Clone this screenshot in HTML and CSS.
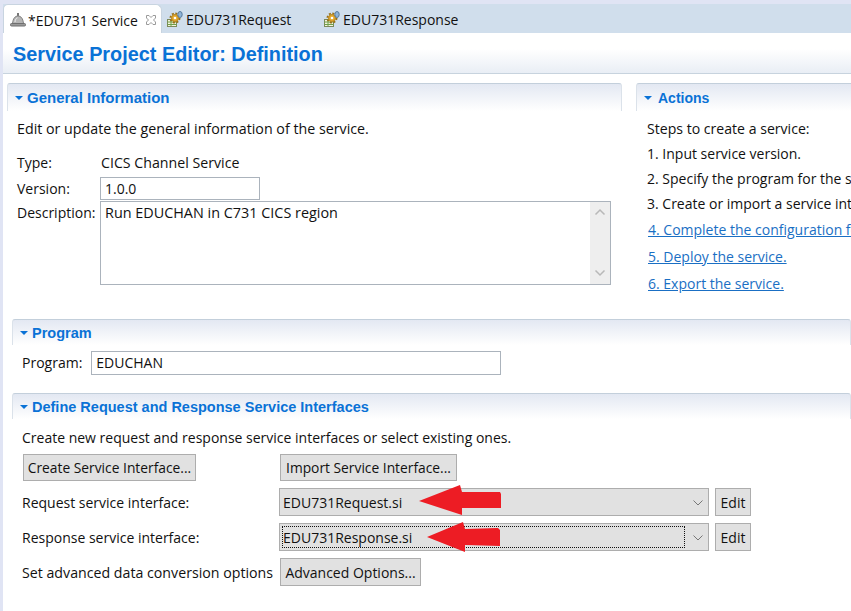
FILE: index.html
```html
<!DOCTYPE html>
<html lang="en">
<head>
    <meta charset="UTF-8">
    <meta name="viewport" content="width=device-width, initial-scale=1.0">
    <title>Service Project Editor</title>
    <link rel="stylesheet" href="styles.css">
</head>
<body>

<!-- Editor tabs -->
<div class="tab-bar">
    <div class="tab tab-active">
        <svg class="tab-icon" width="16" height="16" viewBox="0 0 16 16">
            <rect x="7" y="1" width="2" height="3" fill="#777"/>
            <path d="M2.500 11.500C3 6.500 5 4 8 4s5 2.500 5.500 7.500z" fill="#b5b5b5" stroke="#808080"/>
            <path d="M5 10C5.300 7.500 6 6.300 7.500 5.800" fill="none" stroke="#eee"/>
            <rect x="0.500" y="11.500" width="15" height="2.500" rx="1" fill="#999" stroke="#6f6f6f"/>
        </svg>
        <span class="tab-label">*EDU731 Service</span>
        <svg class="tab-close" width="12" height="12" viewBox="0 0 12 12">
            <path d="M1.500 1.500h2.500L6 3.500 8 1.500h2.500v2.500L8.500 6l2 2v2.500H8L6 8.500 4 10.500H1.500V8l2-2-2-2z" fill="#fff" stroke="#9a9a9a"/>
        </svg>
    </div>
    <div class="tab tab-request">
        <svg class="tab-icon" width="16" height="16" viewBox="0 0 16 16">
            <rect x="0.500" y="8.500" width="9" height="7" fill="#f3f3dc" stroke="#7c8a5a"/>
            <path d="M0.500 11h9M0.500 13.500h9M4 9v6" stroke="#6fa04a" fill="none"/>
            <circle cx="8" cy="7" r="4.500" fill="none" stroke="#96701a" stroke-width="2" stroke-dasharray="2 1.500"/>
            <circle cx="8" cy="7" r="3.500" fill="#e3a92f" stroke="#b8861f"/>
            <circle cx="8" cy="7" r="1.300" fill="#fff"/>
            <ellipse cx="13" cy="3.500" rx="2.200" ry="3" fill="#8fb4d8" stroke="#55789c"/>
        </svg>
        <span class="tab-label">EDU731Request</span>
    </div>
    <div class="tab tab-response">
        <svg class="tab-icon" width="16" height="16" viewBox="0 0 16 16">
            <rect x="0.500" y="8.500" width="9" height="7" fill="#f3f3dc" stroke="#7c8a5a"/>
            <path d="M0.500 11h9M0.500 13.500h9M4 9v6" stroke="#6fa04a" fill="none"/>
            <circle cx="8" cy="7" r="4.500" fill="none" stroke="#96701a" stroke-width="2" stroke-dasharray="2 1.500"/>
            <circle cx="8" cy="7" r="3.500" fill="#e3a92f" stroke="#b8861f"/>
            <circle cx="8" cy="7" r="1.300" fill="#fff"/>
            <ellipse cx="13" cy="3.500" rx="2.200" ry="3" fill="#8fb4d8" stroke="#55789c"/>
        </svg>
        <span class="tab-label">EDU731Response</span>
    </div>
</div>

<div class="editor">
    <h1 class="editor-title">Service Project Editor: Definition</h1>

    <div class="columns">
        <!-- General information -->
        <section class="section section-general">
            <h2 class="section-head"><span class="twistie"></span>General Information</h2>
            <p class="intro">Edit or update the general information of the service.</p>
            <div class="info-grid">
                <span class="info-label">Type:</span>
                <span class="info-type">CICS Channel Service</span>
                <span class="info-label">Version:</span>
                <div class="field field-version">1.0.0</div>
                <span class="info-label">Description:</span>
                <div class="field field-description">
                    <span>Run EDUCHAN in C731 CICS region</span>
                    <div class="scrollbar">
                        <svg width="12" height="8" viewBox="0 0 12 8"><path d="M1.500 6.500L6 2l4.500 4.500" fill="none" stroke="#b8b8b8" stroke-width="1.500"/></svg>
                        <svg width="12" height="8" viewBox="0 0 12 8"><path d="M1.500 1.500L6 6l4.500-4.500" fill="none" stroke="#b8b8b8" stroke-width="1.500"/></svg>
                    </div>
                </div>
            </div>
        </section>

        <!-- Actions -->
        <section class="section section-actions">
            <h2 class="section-head"><span class="twistie"></span>Actions</h2>
            <ul class="steps">
                <li>Steps to create a service:</li>
                <li>1. Input service version.</li>
                <li>2. Specify the program for the service.</li>
                <li>3. Create or import a service interface.</li>
                <li class="step-link"><a href="#">4. Complete the configuration for the service.</a></li>
                <li class="step-link"><a href="#">5. Deploy the service.</a></li>
                <li class="step-link"><a href="#">6. Export the service.</a></li>
            </ul>
        </section>
    </div>

    <!-- Program -->
    <section class="section section-program">
        <h2 class="section-head"><span class="twistie"></span>Program</h2>
        <div class="program-row">
            <span>Program:</span>
            <div class="field field-program">EDUCHAN</div>
        </div>
    </section>

    <!-- Service interfaces -->
    <section class="section section-interfaces">
        <h2 class="section-head"><span class="twistie"></span>Define Request and Response Service Interfaces</h2>
        <p class="interfaces-intro">Create new request and response service interfaces or select existing ones.</p>
        <div class="iface-grid">
            <div><button class="btn btn-create">Create Service Interface...</button></div>
            <div><button class="btn btn-import">Import Service Interface...</button></div>
            <div></div>

            <span>Request service interface:</span>
            <div class="select">
                <span>EDU731Request.si</span>
                <svg class="chevron" width="12" height="8" viewBox="0 0 12 8"><path d="M1.500 1.500L6 6l4.500-4.500" fill="none" stroke="#777"/></svg>
                <svg class="red-arrow arrow-request" width="83" height="30" viewBox="0 0 83 30"><path d="M0 16L41 0l2 7h38l1 2v14H43v7z" fill="#ed1c24"/></svg>
            </div>
            <button class="btn btn-edit">Edit</button>

            <span>Response service interface:</span>
            <div class="select select-focus">
                <span class="select-value">EDU731Response.si</span>
                <svg class="chevron" width="12" height="8" viewBox="0 0 12 8"><path d="M1.500 1.500L6 6l4.500-4.500" fill="none" stroke="#777"/></svg>
                <svg class="red-arrow arrow-response" width="74" height="30" viewBox="0 0 74 30"><path d="M0 15L36 0l2 7 33-1 2 2v16l-35-1v7z" fill="#ed1c24"/></svg>
            </div>
            <button class="btn btn-edit">Edit</button>

            <span class="advanced-label">Set advanced data conversion options</span>
            <div><button class="btn btn-advanced">Advanced Options...</button></div>
            <div></div>
        </div>
    </section>
</div>

</body>
</html>
```

FILE: styles.css
```css
/* General */
html, body {
    height: 100%;
}

body {
    margin: 0;
    padding: 4px 0 0 0;
    box-sizing: border-box;
    overflow: hidden;
    background-color: #e0e4f4;
    color: #111;
    font-family: "Open Sans", "Noto Sans", sans-serif;
    font-size: 14px;
}

/* Tabs */
.tab-bar {
    display: flex;
    height: 29px;
    background-color: #d0deec;
    margin-left: 3px;
    white-space: nowrap;
}

.tab {
    display: flex;
    align-items: center;
    box-sizing: border-box;
    height: 29px;
    padding-top: 1px;
    font-size: 14px;
}

.tab-label {
    padding-top: 1px;
}

.tab-active {
    width: 159px;
    padding-left: 6px;
    background-color: white;
    border-radius: 5px 6px 0 0;
    border: 1px solid #c8d4e0;
    border-bottom: none;
}

.tab-active .tab-label {
    margin-left: 1px;
}

.tab-request {
    width: 156px;
    padding-left: 5px;
}

.tab-response {
    padding-left: 6px;
}

.tab-icon {
    flex: none;
    margin-right: 3px;
}

.tab-active .tab-icon {
    margin-right: 1px;
}

.tab-close {
    flex: none;
    margin-left: 7px;
}

/* Editor */
.editor {
    margin-left: 3px;
    height: 578px;
    background-color: white;
}

.editor-title {
    margin: 0;
    box-sizing: border-box;
    height: 41px;
    padding: 8px 0 0 10px;
    background: linear-gradient(#fff, #fff 40%, #e9eef5);
    border-bottom: 1px solid #c7d3de;
    color: #0a72d6;
    font-family: "Liberation Sans", Arial, sans-serif;
    font-size: 19.85px;
    font-weight: bold;
    line-height: 26px;
    white-space: nowrap;
}

/* Sections */
.columns {
    display: flex;
    gap: 14px;
    height: 236px;
    padding: 9px 0 0 4px;
}

.section-head {
    display: flex;
    align-items: center;
    margin: 0;
    height: 27px;
    padding-left: 7px;
    background: linear-gradient(#e3e8f2, #fff);
    border-top: 1px solid #c3cfdb;
    border-left: 1px solid #dbe2ea;
    border-right: 1px solid #dbe2ea;
    border-radius: 3px 3px 0 0;
    color: #0a72d6;
    font-family: "Liberation Sans", Arial, sans-serif;
    font-size: 14.5px;
    font-weight: bold;
    white-space: nowrap;
}

.twistie {
    width: 0;
    height: 0;
    margin: 0 4px 0 0;
    border-left: 4px solid transparent;
    border-right: 4px solid transparent;
    border-top: 4px solid #0a72d6;
}

.section-general {
    flex: none;
    width: 615px;
}

.section-general .section-head {
    font-size: 15px;
}

.section-actions {
    flex: none;
    width: 300px;
}

.section-actions .section-head {
    font-size: 14px;
}

.section-actions .twistie {
    margin-right: 6px;
}

/* General information */
.intro {
    margin: 0;
    padding: 8px 0 0 10px;
    font-size: 14.25px;
    line-height: 19px;
}

.info-grid {
    display: grid;
    grid-template-columns: 83px 1fr;
    row-gap: 1px;
    align-items: start;
    margin: 15px 11px 0 10px;
}

.info-type {
    height: 20px;
    margin-bottom: 3px;
    margin-left: 1px;
    font-size: 14.2px;
    line-height: 20px;
}

.info-label {
    line-height: 23px;
}

.info-grid .info-label:first-child {
    line-height: 20px;
}

.field {
    box-sizing: border-box;
    background-color: white;
    border: 1px solid #abb3bc;
    padding-left: 4px;
    line-height: 21px;
}

.field-version {
    width: 160px;
    height: 23px;
}

.field-description {
    position: relative;
    width: 511px;
    height: 84px;
    font-size: 14.4px;
}

.scrollbar {
    position: absolute;
    top: 0;
    right: 0;
    bottom: 0;
    width: 20px;
    box-sizing: border-box;
    padding: 6px 0 7px;
    background-color: #eee;
    display: flex;
    flex-direction: column;
    justify-content: space-between;
    align-items: center;
}

/* Actions */
.steps {
    list-style: none;
    margin: 0;
    padding: 5px 0 0 11px;
    line-height: 25px;
    white-space: nowrap;
}

.steps li:first-child {
    font-size: 14.1px;
}

.step-link {
    line-height: 27px;
    margin-left: 1px;
}

.steps a {
    color: #1a6fc4;
}

/* Program */
.section-program {
    margin: 0 0 0 9px;
}

.section-program .section-head,
.section-interfaces .section-head {
    height: 25px;
}

.program-row {
    display: flex;
    align-items: center;
    gap: 9px;
    height: 48px;
    padding: 5px 0 18px 10px;
    box-sizing: border-box;
}

.field-program {
    width: 410px;
    height: 24px;
    line-height: 22px;
}

/* Service interfaces */
.section-interfaces {
    margin: 0 0 0 9px;
}

.interfaces-intro {
    margin: 0;
    padding: 9px 0 0 10px;
    line-height: 19px;
}

.iface-grid {
    display: grid;
    grid-template-columns: 257px 436px auto;
    grid-template-rows: 27px 28px 28px 28px;
    row-gap: 7px;
    align-items: center;
    justify-content: start;
    margin: 7px 0 0 10px;
    white-space: nowrap;
}

.advanced-label {
    font-size: 14.2px;
}

.btn {
    display: block;
    box-sizing: border-box;
    height: 28px;
    padding: 0;
    background-color: #e1e1e1;
    border: 1px solid #adadad;
    color: #111;
    font-family: inherit;
    font-size: 14px;
    white-space: nowrap;
}

.btn-create {
    width: 173px;
    height: 27px;
    margin-left: 1px;
    font-size: 13.8px;
}

.btn-import {
    width: 177px;
    height: 27px;
    margin-left: 1px;
    font-size: 13.8px;
}

.btn-edit {
    width: 36px;
}

.btn-advanced {
    width: 141px;
    margin-left: 1px;
}

.select {
    position: relative;
    display: flex;
    align-items: center;
    box-sizing: border-box;
    width: 430px;
    height: 28px;
    padding-left: 3px;
    background-color: #e1e1e1;
    border: 1px solid #adadad;
}

.select-focus::before {
    content: "";
    position: absolute;
    top: 2px;
    bottom: 2px;
    left: 2px;
    right: 23px;
    border: 1px dotted #111;
}

.chevron {
    position: absolute;
    right: 4px;
    top: 10px;
}

/* Red arrows pasted on the screenshot */
.red-arrow {
    position: absolute;
}

.arrow-request {
    left: 139px;
    top: -4px;
}

.arrow-response {
    left: 147px;
    top: -2px;
}
```
